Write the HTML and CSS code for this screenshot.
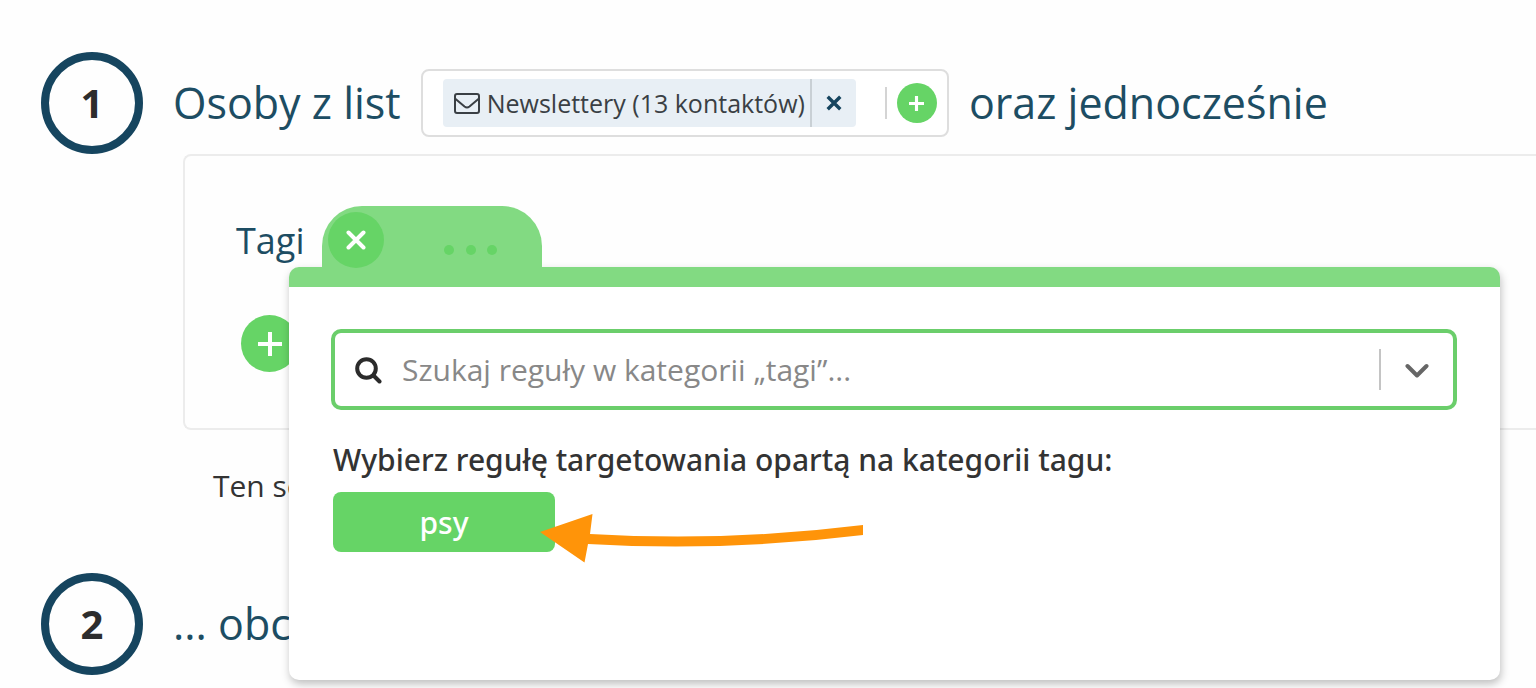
FILE: index.html
```html
<!DOCTYPE html>
<html lang="pl">
<head>
<meta charset="utf-8">
<meta name="viewport" content="width=device-width, initial-scale=1">
<title>Targetowanie</title>
<link rel="stylesheet" href="styles.css">
</head>
<body>
<main class="builder">
  <section class="step">
    <div class="badge">1</div>
    <h2 class="step-title">Osoby z list</h2>
    <div class="lists">
      <div class="chip">
        <span class="chip-label">
          <svg class="envelope" viewBox="0 0 26 21" aria-hidden="true"><rect x="1" y="1" width="24" height="19" rx="2"/><path d="M1 5.500L10.500 13.500Q13 15.500 15.500 13.500L25 5.500"/></svg>
          Newslettery (13 kontaktów)
        </span>
        <button class="chip-remove" type="button" aria-label="Usuń listę">
          <svg class="cross" viewBox="0 0 14 14" aria-hidden="true"><path d="M1.500 1.500L12.500 12.500M12.500 1.500L1.500 12.500"/></svg>
        </button>
      </div>
      <div class="lists-add">
        <button class="round round-small" type="button" aria-label="Dodaj listę">
          <svg class="plus plus-small" viewBox="0 0 24 24" aria-hidden="true"><path d="M12 0V24M0 12H24"/></svg>
        </button>
      </div>
    </div>
    <p class="step-title">oraz jednocześnie</p>
  </section>

  <section class="rules">
    <div class="rule-head">
      <h3 class="rule-name">Tagi</h3>
      <div class="tab">
        <button class="round tab-close" type="button" aria-label="Zamknij">
          <svg class="tab-cross" viewBox="0 0 20 20" aria-hidden="true"><path d="M2.500 2.500L17.500 17.500M17.500 2.500L2.500 17.500"/></svg>
        </button>
        <svg class="dots" viewBox="0 0 54 10" aria-hidden="true"><circle cx="5" cy="5" r="5"/><circle cx="27" cy="5" r="5"/><circle cx="48" cy="5" r="5"/></svg>
      </div>
    </div>
    <button class="round" type="button" aria-label="Dodaj regułę">
      <svg class="plus" viewBox="0 0 24 24" aria-hidden="true"><path d="M12 0V24M0 12H24"/></svg>
    </button>

    <div class="popup">
      <div class="search">
        <svg class="search-icon" viewBox="0 0 27 29" aria-hidden="true"><circle cx="11.500" cy="13.500" r="9.300"/><path d="M18.500 20.500L24.500 26.500"/></svg>
        <input class="search-input" type="text" aria-label="Szukaj reguły" placeholder="Szukaj reguły w kategorii „tagi”...">
        <button class="search-toggle" type="button" aria-label="Rozwiń">
          <svg class="chevron" viewBox="0 0 24 16" aria-hidden="true"><path d="M2.500 4L12 13.500L21.500 4"/></svg>
        </button>
      </div>
      <h4 class="popup-title">Wybierz regułę targetowania opartą na kategorii tagu:</h4>
      <div class="choice">
        <button class="tag" type="button">psy</button>
        <svg class="arrow" viewBox="540 513 324 50" aria-hidden="true"><path d="M540 532L592.500 514L590 534Q727 542 863 525V535Q725 552 588 544L584.500 562.500Z"/></svg>
      </div>
    </div>
  </section>

  <p class="note">Ten se</p>

  <section class="step">
    <div class="badge">2</div>
    <h2 class="step-title">... obc</h2>
  </section>
</main>
</body>
</html>
```
FILE: styles.css
```css
* {
  box-sizing: border-box;
}

body {
  margin: 0;
  background: #fefefe;
  color: #333;
  font-family: "Open Sans", "Noto Sans", sans-serif;
}

h2, h3, h4, p {
  margin: 0;
}

button {
  padding: 0;
  border: 0;
  font: inherit;
  cursor: pointer;
}

svg {
  display: block;
  flex: none;
  fill: none;
  stroke: currentColor;
}

.builder {
  min-height: 100vh;
  padding-top: 52px;
  overflow: hidden;
}

.step {
  display: flex;
  align-items: center;
  padding-left: 41px;
}

.badge {
  display: flex;
  align-items: center;
  justify-content: center;
  flex: none;
  width: 102px;
  height: 102px;
  margin-right: 30px;
  border: 8px solid #16455f;
  border-radius: 50%;
  font-size: 40px;
  font-weight: 700;
  line-height: 52px;
  color: #2d2d2d;
}

.step-title {
  color: #1d4d63;
  font-size: 43px;
  font-weight: 400;
  line-height: 60px;
  white-space: nowrap;
}

.lists {
  display: flex;
  align-items: center;
  height: 68px;
  margin: 0 20px;
  padding: 0 10px 0 20px;
  border: 2px solid #dedede;
  border-radius: 8px;
  background: #fff;
}

.chip {
  display: flex;
  height: 48px;
  border-radius: 4px;
  background: #e8eff5;
}

.chip-label {
  display: flex;
  align-items: center;
  gap: 7px;
  padding: 0 5px 0 11px;
  color: #3a3f44;
  font-size: 25px;
  white-space: nowrap;
}

.envelope {
  width: 26px;
  height: 21px;
  stroke-width: 2;
}

.chip-remove {
  display: flex;
  align-items: center;
  justify-content: center;
  width: 46px;
  border-left: 2px solid #c9d0d5;
  border-radius: 0;
  background: none;
  color: #16455f;
}

.cross {
  width: 16px;
  height: 16px;
  stroke-width: 3;
}

.lists-add {
  display: flex;
  align-items: center;
  height: 32px;
  margin-left: 29px;
  padding-left: 10px;
  border-left: 2px solid #d4d4d4;
}

.round {
  display: flex;
  align-items: center;
  justify-content: center;
  flex: none;
  width: 57px;
  height: 57px;
  border-radius: 50%;
  background: #66d466;
  color: #fff;
}

.round-small {
  width: 40px;
  height: 40px;
}

.plus {
  width: 24px;
  height: 24px;
  stroke-width: 4;
}

.plus-small {
  width: 15px;
  height: 15px;
  stroke-width: 5;
}

.rules {
  position: relative;
  height: 276px;
  margin-left: 183px;
  padding: 50px 0 0 51px;
  border: 2px solid #ececec;
  border-right: 0;
  border-radius: 8px 0 0 8px;
}

.rules > .round {
  margin: 39px 0 0 5px;
}

.rule-head {
  display: flex;
}

.rule-name {
  width: 86px;
  color: #1d4d63;
  font-size: 36px;
  font-weight: 400;
  line-height: 70px;
}

.tab {
  display: flex;
  position: relative;
  z-index: 2;
  width: 220px;
  height: 61px;
  padding: 6px;
  border-radius: 40px 40px 0 0;
  background: #82da82;
}

.tab-close {
  width: 56px;
  height: 56px;
}

.tab-cross {
  width: 20px;
  height: 20px;
  stroke-width: 4;
  stroke-linecap: round;
}

.dots {
  width: 54px;
  height: 10px;
  margin: 33px 0 0 60px;
  fill: #66d466;
  stroke: none;
}

.popup {
  position: absolute;
  z-index: 1;
  top: 111px;
  right: 36px;
  left: 104px;
  height: 413px;
  padding: 42px 43px 0 42px;
  border-top: 20px solid #82da82;
  border-radius: 10px;
  background: #fff;
  box-shadow: 1px 4px 8px rgba(0, 0, 0, 0.25);
}

.search {
  display: flex;
  align-items: center;
  height: 81px;
  padding-left: 20px;
  border: 4px solid #6bce6b;
  border-radius: 10px;
  background: #fff;
}

.search-icon {
  width: 27px;
  height: 29px;
  color: #2b2b2b;
  stroke-width: 4;
  stroke-linecap: round;
}

.search-input {
  flex: 1;
  min-width: 0;
  margin-left: 20px;
  padding: 0;
  border: 0;
  outline: 0;
  background: none;
  color: #333;
  font: inherit;
  font-size: 30px;
}

.search-input::placeholder {
  color: #888;
  opacity: 1;
}

.search-toggle {
  display: flex;
  align-items: center;
  justify-content: center;
  width: 74px;
  height: 41px;
  border-left: 2px solid #c4c4c4;
  background: none;
  color: #666;
}

.chevron {
  width: 24px;
  height: 16px;
  stroke-width: 4;
  stroke-linecap: round;
  stroke-linejoin: round;
}

.popup-title,
.tag {
  font-family: "Noto Sans", "Open Sans", sans-serif;
  font-size: 30px;
  font-weight: 500;
}

.popup-title {
  margin: 30px 0 12px 2px;
  line-height: 40px;
  white-space: nowrap;
}

.choice {
  position: relative;
  margin-left: 2px;
}

.tag {
  display: block;
  width: 222px;
  height: 60px;
  border-radius: 8px;
  background: #66d466;
  color: #fff;
}

.arrow {
  position: absolute;
  top: 21px;
  left: 207px;
  width: 324px;
  height: 50px;
  fill: #ff9409;
  stroke: none;
}

.note {
  margin: 36px 0 67px 213px;
  font-size: 30px;
  line-height: 40px;
}
```
